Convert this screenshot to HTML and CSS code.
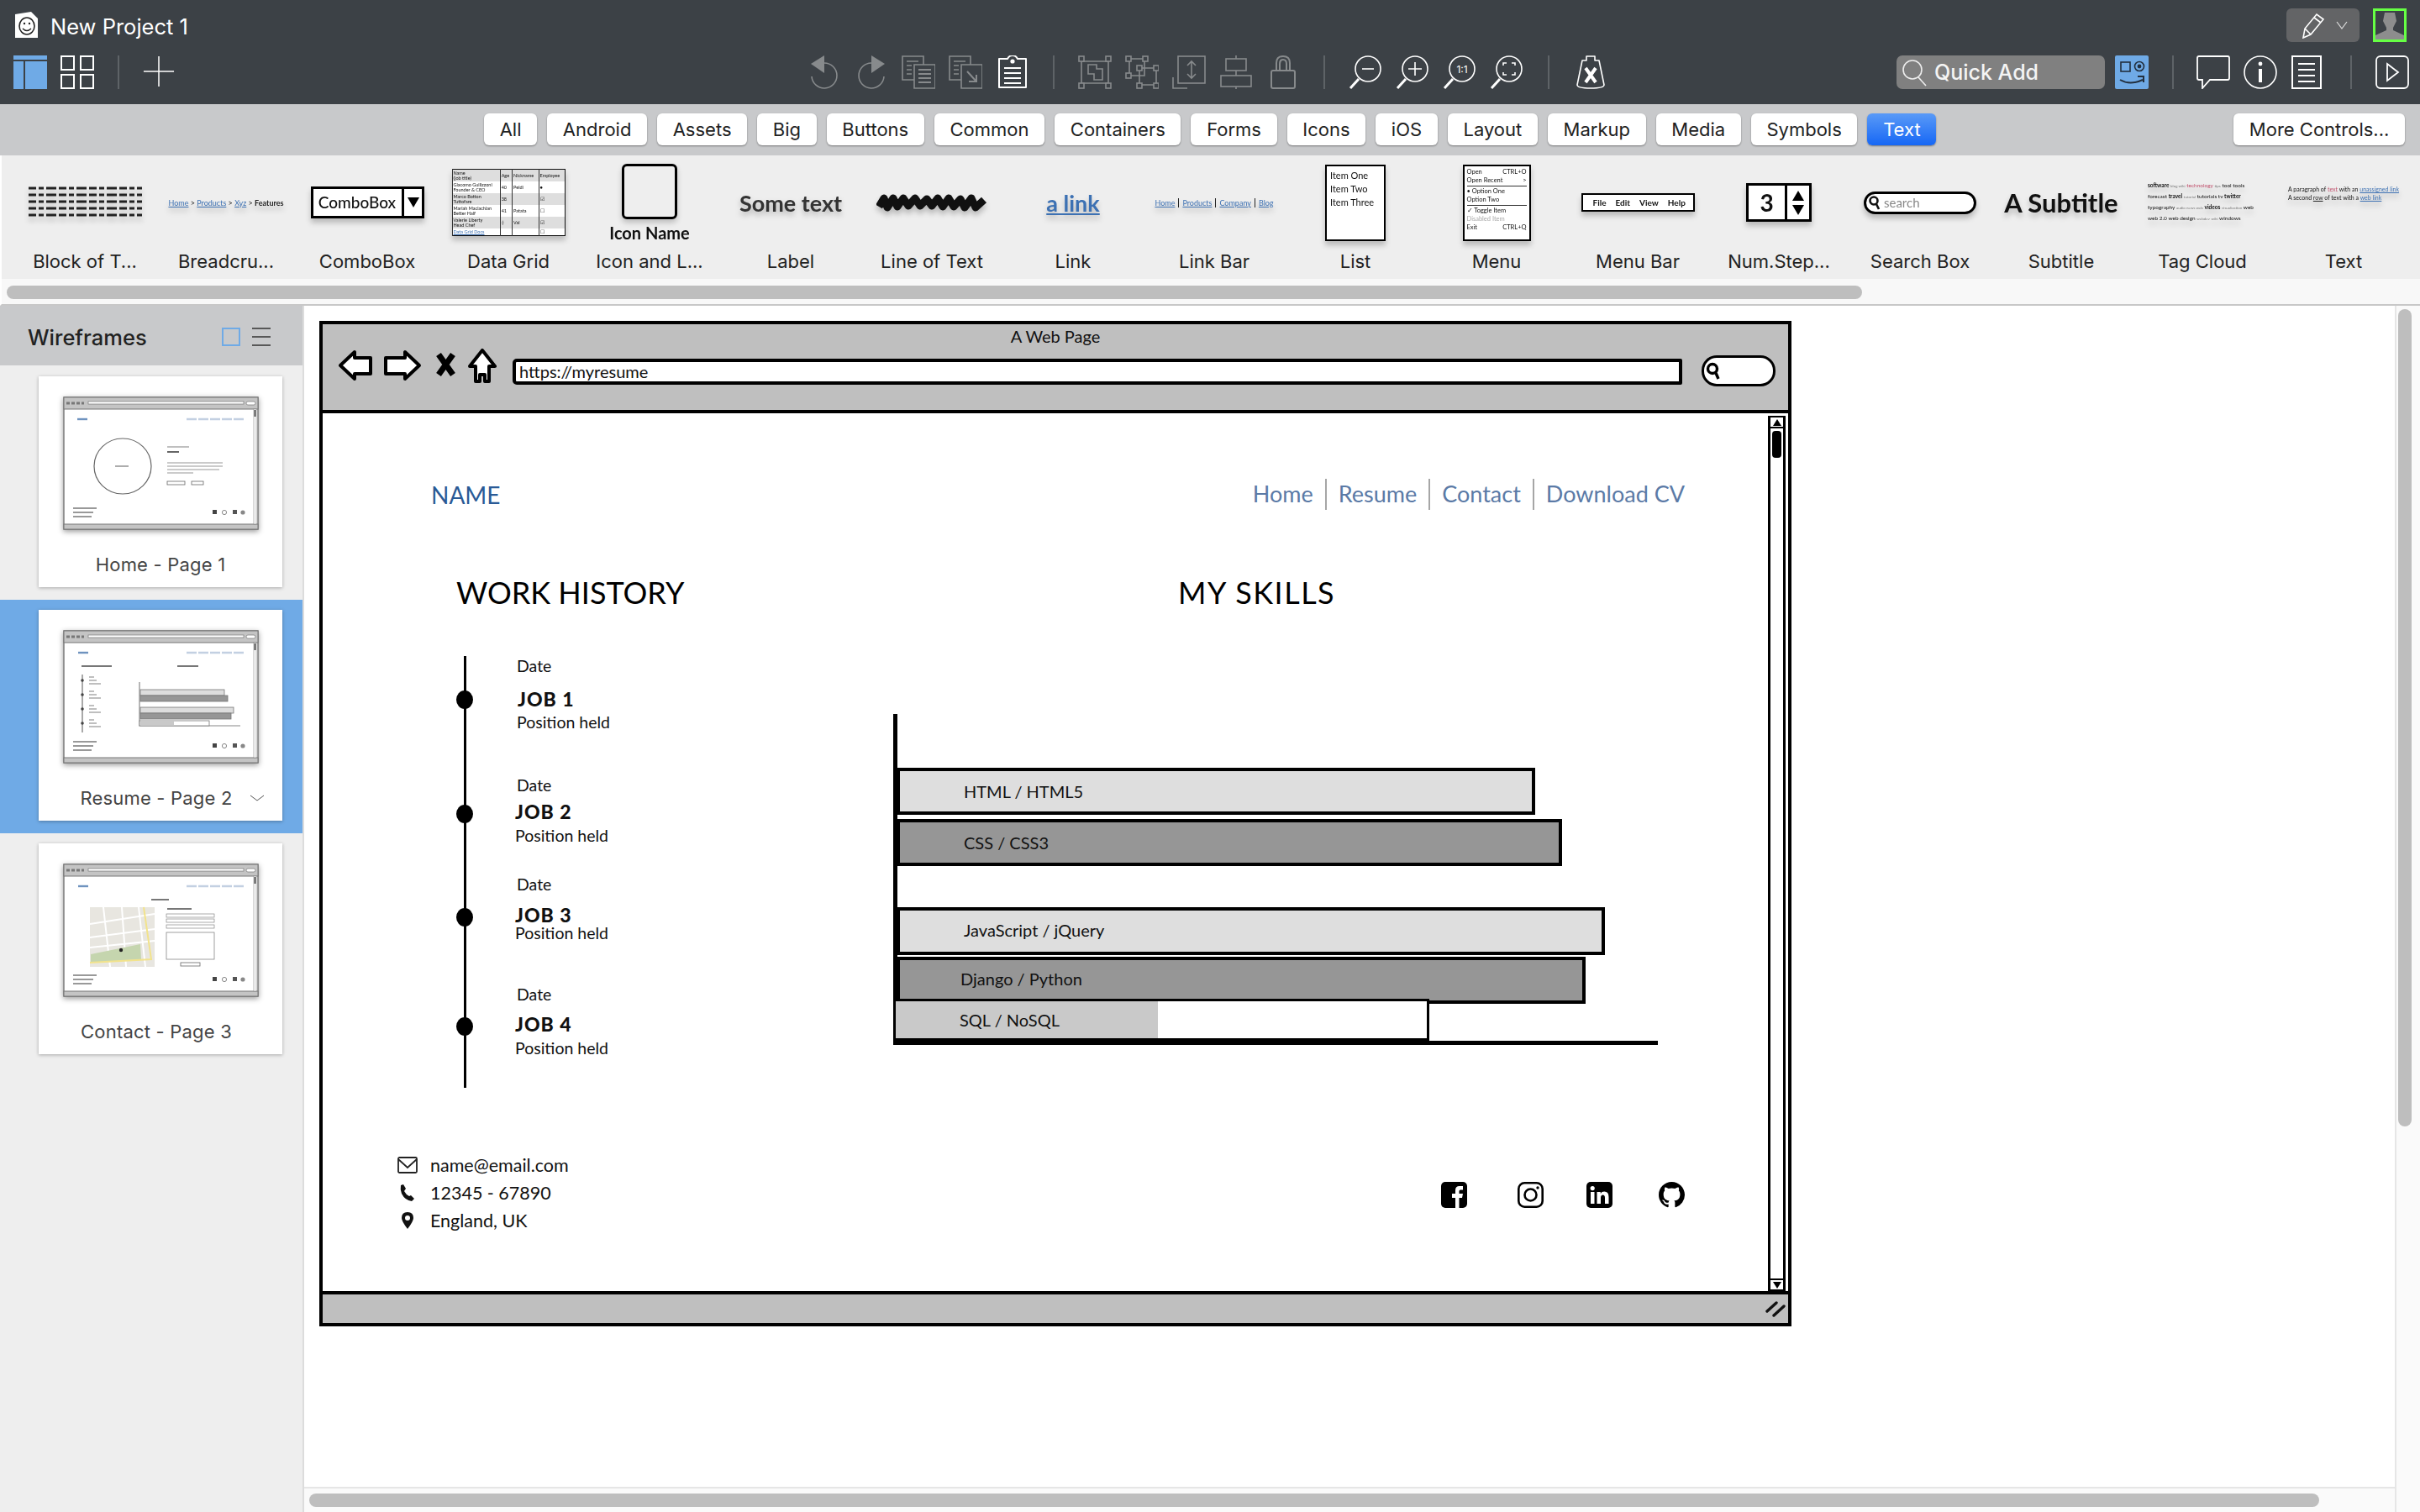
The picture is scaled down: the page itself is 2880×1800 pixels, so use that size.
FILE: index.html
```html
<!DOCTYPE html>
<html lang="en">
<head>
  <meta charset="UTF-8">
  <title>New Project 1</title>
  <link rel="stylesheet" href="styles.css">
</head>
<body>
  <div id="app">
    <header class="topbar">
      <div class="title-row">
        <svg class="app-icon" viewBox="0 0 27 31"><path d="M0 3 L19 0 L27 8 V31 H0 Z" fill="#fff"/><ellipse cx="14" cy="17" rx="9" ry="10" fill="none" stroke="#222" stroke-width="1.6"/><circle cx="11" cy="14" r="1.2" fill="#222"/><circle cx="17" cy="14" r="1.2" fill="#222"/><path d="M9 20 Q14 25 19 20" fill="none" stroke="#222" stroke-width="1.5"/></svg>
        <span class="app-title">New Project 1</span>
        <div class="pencil-btn">
          <svg width="30" height="32" viewBox="0 0 30 32" fill="none" stroke="#fff" stroke-width="1.6"><path d="M3 31 L5 20 L19 3 L27 9 L12 27 Z M16 7 L24 13 M5 20 L12 27"/></svg>
          <svg width="14" height="10" viewBox="0 0 14 10" fill="none" stroke="#ddd" stroke-width="1.2"><path d="M1 1 L7 9 L13 1"/></svg>
        </div>
        <div class="avatar">
          <svg width="34" height="34" viewBox="0 0 34 34"><path d="M11 2 H23 L25 12 L21 20 V23 L34 29 V34 H0 V29 L13 23 V20 L9 12 Z" fill="#8d8d8d"/></svg>
        </div>
      </div>
      <div class="tool-row">
        <svg class="tool" viewBox="0 0 40 40"><path d="M0 0 H40 V5 H0 Z M0 7 H12 V40 H0 Z M14 7 H40 V40 H14 Z" fill="#6faae6"/></svg>
        <svg class="tool" viewBox="0 0 40 40" fill="none" stroke="#fff" stroke-width="2"><rect x="1" y="1" width="15" height="16"/><rect x="24" y="1" width="15" height="16"/><rect x="1" y="23" width="15" height="16"/><rect x="24" y="23" width="15" height="16"/></svg>
        <i class="tool-sep sep-left"></i>
        <svg class="tool tool-plus" viewBox="0 0 40 40" stroke="#fff" stroke-width="1.6"><path d="M20 0 V38 M1 19 H39"/></svg>

        <div class="tool-group center-group">
          <svg class="tool" viewBox="0 0 40 40" fill="none" stroke="#878a8c" stroke-width="1.6"><path d="M20 9 A15 15 0 1 1 5 25"/><path d="M4 10 L20 0 V21 Z" fill="#878a8c" stroke="none"/></svg>
          <svg class="tool" viewBox="0 0 40 40" fill="none" stroke="#878a8c" stroke-width="1.6"><path d="M20 9 A15 15 0 1 0 35 25"/><path d="M36 10 L20 0 V21 Z" fill="#878a8c" stroke="none"/></svg>
          <svg class="tool" viewBox="0 0 40 40" fill="none" stroke="#878a8c" stroke-width="1.6"><path d="M1 1 H26 V29 H1 Z"/><path d="M6 7 H20 M6 12 H12 M6 17 H12 M6 22 H12"/><path d="M15 11 H40 V39 H15 Z" fill="#3c4146"/><path d="M20 17 H35 M20 22 H35 M20 27 H35 M20 32 H35" stroke-width="1.8"/></svg>
          <svg class="tool" viewBox="0 0 40 40" fill="none" stroke="#878a8c" stroke-width="1.6"><path d="M1 1 H26 V29 H1 Z"/><path d="M6 7 H20 M6 12 H12 M6 17 H12 M6 22 H12"/><path d="M15 11 H40 V39 H15 Z" fill="#3c4146"/><path d="M22 19 L33 31 M33 23 V31 H24" stroke-width="2"/></svg>
          <svg class="tool" viewBox="0 0 40 40" fill="none" stroke="#fff" stroke-width="2"><path d="M4 4 H14 Q16 0 20 0 Q24 0 26 4 H36 V38 H4 Z" stroke-linejoin="round"/><circle cx="20" cy="7" r="2.6" fill="#fff" stroke="none"/><path d="M10 15 H30 M10 21 H30 M10 27 H30 M10 33 H30" stroke-width="1.8"/></svg>
          <i class="tool-sep sep-a"></i>
          <svg class="tool" viewBox="0 0 40 40" fill="none" stroke="#878a8c" stroke-width="1.6"><path d="M4 7 H36 M4 33 H36 M4 7 V33 M36 7 V33"/><g fill="#3c4146"><rect x="1" y="1" width="6" height="6"/><rect x="33" y="1" width="6" height="6"/><rect x="1" y="33" width="6" height="6"/><rect x="33" y="33" width="6" height="6"/></g><path d="M12 11 H22 V16 H29 V29 H19 V22 H12 Z"/></svg>
          <svg class="tool" viewBox="0 0 40 40" fill="none" stroke="#878a8c" stroke-width="1.6"><path d="M5 4 H23 V24 H5 Z M17 15 H37 V35 H17 Z"/><g fill="#3c4146"><rect x="1" y="1" width="6" height="6"/><rect x="21" y="1" width="6" height="6"/><rect x="1" y="21" width="6" height="6"/><rect x="14" y="12" width="6" height="6"/><rect x="34" y="12" width="6" height="6"/><rect x="14" y="33" width="6" height="6"/><rect x="34" y="33" width="6" height="6"/></g></svg>
          <svg class="tool" viewBox="0 0 40 40" fill="none" stroke="#878a8c" stroke-width="1.6"><rect x="7" y="1" width="32" height="32"/><path d="M1 26 V39 H18"/><path d="M23 7 V27 M18 12 L23 7 L28 12 M18 22 L23 27 L28 22"/></svg>
          <svg class="tool" viewBox="0 0 40 40" fill="none" stroke="#878a8c" stroke-width="1.6"><path d="M20 0 V40"/><rect x="8" y="4" width="24" height="14" fill="#3c4146"/><rect x="2" y="24" width="36" height="13" fill="#3c4146"/></svg>
          <svg class="tool" viewBox="0 0 40 40" fill="none" stroke="#878a8c" stroke-width="2"><path d="M12 18 V9 Q12 1 20 1 Q28 1 28 9 V18 M16 18 V10 Q16 5 20 5 Q24 5 24 10 V18"/><rect x="6" y="18" width="28" height="21" rx="2"/></svg>
          <i class="tool-sep sep-b"></i>
          <svg class="tool" viewBox="0 0 40 40" fill="none" stroke="#fff" stroke-width="1.6"><circle cx="23" cy="16" r="15"/><path d="M12 28 L2 39" stroke-width="3"/><path d="M16 16 H30"/></svg>
          <svg class="tool" viewBox="0 0 40 40" fill="none" stroke="#fff" stroke-width="1.6"><circle cx="23" cy="16" r="15"/><path d="M12 28 L2 39" stroke-width="3"/><path d="M15 16 H31 M23 8 V24"/></svg>
          <svg class="tool" viewBox="0 0 40 40" fill="none" stroke="#fff" stroke-width="1.6"><circle cx="23" cy="16" r="15"/><path d="M12 28 L2 39" stroke-width="3"/><text x="23" y="21" class="tool-text" text-anchor="middle" fill="#fff" stroke="none">1:1</text></svg>
          <svg class="tool" viewBox="0 0 40 40" fill="none" stroke="#fff" stroke-width="1.6"><circle cx="23" cy="16" r="15"/><path d="M12 28 L2 39" stroke-width="3"/><path d="M16 12 V9 H20 M26 9 H30 V12 M30 20 V23 H26 M20 23 H16 V20"/></svg>
          <i class="tool-sep sep-c"></i>
          <svg class="tool" viewBox="0 0 40 40" fill="none" stroke="#fff" stroke-width="1.6"><path d="M10 6 H15 V1 H25 V6 H30 L36 35 Q36 39 20 39 Q4 39 4 35 Z" stroke-linejoin="round"/><path d="M14 15 L26 32 M26 15 L14 32" stroke-width="4"/></svg>
        </div>

        <div class="quick-add">
          <svg width="30" height="34" viewBox="0 0 30 34" fill="none" stroke="#eee" stroke-width="1.6"><circle cx="13" cy="14" r="11"/><path d="M20 23 L29 33"/></svg>
          <span>Quick Add</span>
        </div>
        <div class="amazon-btn">
          <svg width="40" height="40" viewBox="0 0 40 40" fill="none" stroke="#22303f" stroke-width="1.6"><rect x="7" y="8" width="11" height="11"/><circle cx="29" cy="13" r="5.5"/><circle cx="29" cy="13" r="1.6" fill="#22303f"/><path d="M6 29 Q18 36 33 29 M27 25 H34 V32" stroke-width="2"/></svg>
        </div>
        <i class="tool-sep sep-d"></i>
        <div class="tool-group right-group">
          <svg class="tool" viewBox="0 0 40 40" fill="none" stroke="#fff" stroke-width="1.8"><path d="M3 1 H37 Q39 1 39 3 V27 Q39 29 37 29 H16 L7 39 V29 H3 Q1 29 1 27 V3 Q1 1 3 1 Z"/></svg>
          <svg class="tool" viewBox="0 0 40 40" fill="none" stroke="#fff" stroke-width="1.6"><circle cx="20" cy="20" r="19"/><path d="M20 16 V32" stroke-width="4"/><circle cx="20" cy="10" r="2.4" fill="#fff" stroke="none"/></svg>
          <svg class="tool" viewBox="0 0 40 40" fill="none" stroke="#fff" stroke-width="2"><rect x="2" y="1" width="34" height="38"/><path d="M9 10 H29 M9 17 H29 M9 24 H29 M9 31 H29" stroke-width="1.8"/></svg>
          <i class="tool-sep sep-e"></i>
          <svg class="tool" viewBox="0 0 40 40" fill="none" stroke="#fff" stroke-width="1.8"><rect x="1" y="1" width="38" height="38" rx="5"/><path d="M14 10 L27 20 L14 30 Z"/></svg>
        </div>
      </div>
    </header>

    <nav class="filter-bar">
      <button class="tab">All</button>
      <button class="tab">Android</button>
      <button class="tab">Assets</button>
      <button class="tab">Big</button>
      <button class="tab">Buttons</button>
      <button class="tab">Common</button>
      <button class="tab">Containers</button>
      <button class="tab">Forms</button>
      <button class="tab">Icons</button>
      <button class="tab">iOS</button>
      <button class="tab">Layout</button>
      <button class="tab">Markup</button>
      <button class="tab">Media</button>
      <button class="tab">Symbols</button>
      <button class="tab active">Text</button>
      <button class="tab more">More Controls...</button>
    </nav>

    <section class="library">
      <div class="lib-item">
        <div class="preview">
          <svg class="mini-blocks" width="136" height="40" viewBox="0 0 136 40" stroke="#222" stroke-width="3" stroke-dasharray="9 3 6 3 12 3"><path d="M1 3 H136 M1 11 H136 M1 19 H136 M1 27 H136 M1 35 H136"/></svg>
        </div>
        <div class="lib-label">Block of T...</div>
      </div>
      <div class="lib-item">
        <div class="preview"><div class="crumbs mini-shadow"><u>Home</u> &gt; <u>Products</u> &gt; <u>Xyz</u> &gt; <b>Features</b></div></div>
        <div class="lib-label">Breadcru...</div>
      </div>
      <div class="lib-item">
        <div class="preview">
          <div class="mini-combo mini-shadow"><span>ComboBox</span><i class="arrow-down"></i></div>
        </div>
        <div class="lib-label">ComboBox</div>
      </div>
      <div class="lib-item">
        <div class="preview">
          <table class="mini-grid mini-shadow">
            <tr class="odd"><td>Name<br>(job title)</td><td>Age</td><td>Nickname</td><td>Employee</td></tr>
            <tr><td>Giacomo Guilizzoni<br>Founder &amp; CEO</td><td>40</td><td>Peldi</td><td>&#9679;</td></tr>
            <tr class="odd"><td>Marco Botton<br>Tuttofare</td><td>38</td><td></td><td>&#9745;</td></tr>
            <tr><td>Mariah Maclachlan<br>Better Half</td><td>41</td><td>Patata</td><td>&#9744;</td></tr>
            <tr class="odd"><td>Valerie Liberty<br>Head Chef</td><td>:)</td><td>Val</td><td>&#9745;</td></tr>
            <tr><td class="grid-link">Data Grid Docs</td><td></td><td></td><td>&#9744;</td></tr>
          </table>
        </div>
        <div class="lib-label">Data Grid</div>
      </div>
      <div class="lib-item">
        <div class="preview icon-label">
          <div class="mini-icon"></div>
          <div class="mini-icon-name">Icon Name</div>
        </div>
        <div class="lib-label">Icon and L...</div>
      </div>
      <div class="lib-item">
        <div class="preview"><span class="mini-label mini-shadow">Some text</span></div>
        <div class="lib-label">Label</div>
      </div>
      <div class="lib-item">
        <div class="preview">
          <svg class="mini-shadow" width="132" height="28" viewBox="0 0 132 28" fill="none" stroke="#111" stroke-width="9" stroke-linejoin="round"><path d="M3 19 L9 9 L13 20 L20 9 L25 19 L32 9 L38 18 L46 9 L52 18 L60 10 L66 18 L73 9 L79 19 L86 9 L92 19 L100 10 L105 20 L113 9 L118 20 L128 11"/></svg>
        </div>
        <div class="lib-label">Line of Text</div>
      </div>
      <div class="lib-item">
        <div class="preview"><u class="mini-link mini-shadow">a link</u></div>
        <div class="lib-label">Link</div>
      </div>
      <div class="lib-item">
        <div class="preview"><div class="crumbs bar-links mini-shadow"><u>Home</u><u>Products</u><u>Company</u><u>Blog</u></div></div>
        <div class="lib-label">Link Bar</div>
      </div>
      <div class="lib-item">
        <div class="preview">
          <div class="mini-list mini-shadow"><div>Item One</div><div>Item Two</div><div>Item Three</div></div>
        </div>
        <div class="lib-label">List</div>
      </div>
      <div class="lib-item">
        <div class="preview">
          <div class="mini-menu mini-shadow">
            <div>Open<span>CTRL+O</span></div>
            <div>Open Recent<span>&gt;</span></div>
            <hr>
            <div>&bull; Option One</div>
            <div>Option Two</div>
            <hr>
            <div>&#10003; Toggle Item</div>
            <div class="disabled">Disabled Item</div>
            <div>Exit<span>CTRL+Q</span></div>
          </div>
        </div>
        <div class="lib-label">Menu</div>
      </div>
      <div class="lib-item">
        <div class="preview"><div class="mini-menubar mini-shadow"><span>File</span><span>Edit</span><span>View</span><span>Help</span></div></div>
        <div class="lib-label">Menu Bar</div>
      </div>
      <div class="lib-item">
        <div class="preview">
          <div class="mini-stepper mini-shadow"><span>3</span><div class="step-arrows"><i class="arrow-up"></i><i class="arrow-down"></i></div></div>
        </div>
        <div class="lib-label">Num.Step...</div>
      </div>
      <div class="lib-item">
        <div class="preview">
          <div class="mini-search mini-shadow">
            <svg width="14" height="18" viewBox="0 0 14 18" fill="none" stroke="#111" stroke-width="2.6"><circle cx="6" cy="7" r="4.5"/><path d="M9 11 L12 17"/></svg>
            <span>search</span>
          </div>
        </div>
        <div class="lib-label">Search Box</div>
      </div>
      <div class="lib-item">
        <div class="preview"><span class="mini-subtitle mini-shadow">A Subtitle</span></div>
        <div class="lib-label">Subtitle</div>
      </div>
      <div class="lib-item">
        <div class="preview">
          <div class="mini-cloud mini-shadow">
            <div><b>software</b> <small>blog wiki</small> <em>technology</em> <small>tips</small> tool tools</div>
            <div>forecast <b>travel</b> <small>tutorial</small> tutorials tv <b>twitter</b></div>
            <div>typography <small>audio news web</small> <b>videos</b> <small>visualization</small> web</div>
            <div>web 2.0 web design <small>webdev</small> <small>wiki</small> windows</div>
          </div>
        </div>
        <div class="lib-label">Tag Cloud</div>
      </div>
      <div class="lib-item">
        <div class="preview">
          <div class="mini-para mini-shadow">A paragraph of <em>text</em> with an <u>unassigned link</u><br>A second <u class="plain">row</u> of text with a <u>web link</u></div>
        </div>
        <div class="lib-label">Text</div>
      </div>
    </section>

    <div class="lib-scroll"><div class="lib-thumb"></div></div>

    <div class="workspace">
      <aside class="sidebar">
        <div class="side-head">
          <span class="side-title">Wireframes</span>
          <i class="side-view"></i>
          <svg class="side-menu" width="22" height="22" viewBox="0 0 22 22" stroke="#333" stroke-width="1.6"><path d="M0 1 H22 M0 11 H22 M0 21 H22"/></svg>
        </div>
        <svg class="defs" width="0" height="0">
          <symbol id="thumb-frame" viewBox="0 0 233 159">
            <rect x="1" y="1" width="231" height="157" fill="#fff" stroke="#777" stroke-width="1.4"/>
            <rect x="1" y="1" width="231" height="14" fill="#c4c4c4" stroke="#777" stroke-width="1"/>
            <rect x="1" y="152" width="231" height="6" fill="#c4c4c4" stroke="#777" stroke-width="1"/>
            <rect x="30" y="6" width="185" height="3" fill="#fff" stroke="#777" stroke-width=".7"/>
            <rect x="218" y="6" width="11" height="4" rx="2" fill="#fff" stroke="#777" stroke-width=".7"/>
            <path d="M4 8 H25" stroke="#777" stroke-width="3" stroke-dasharray="4 2"/>
            <rect x="227" y="15" width="3" height="137" fill="#fff" stroke="#888" stroke-width=".6"/>
            <rect x="227.5" y="16" width="2" height="8" fill="#555"/>
            <path d="M12 133 H40 M12 138 H36 M12 143 H34" stroke="#999" stroke-width="2"/>
            <rect x="178" y="135" width="5" height="5" fill="#444"/>
            <circle cx="192" cy="138" r="2.6" fill="none" stroke="#888"/>
            <rect x="202" y="135" width="5" height="5" fill="#555"/>
            <circle cx="214" cy="138" r="2.6" fill="#888"/>
          </symbol>
        </svg>

        <div class="page">
          <div class="page-card">
            <svg class="thumb" viewBox="0 0 233 159">
              <use href="#thumb-frame"/>
              <path d="M17 27 H29" stroke="#6f93bf" stroke-width="2.4"/>
              <path d="M147 27 H215" stroke="#c3d0e2" stroke-width="2.4" stroke-dasharray="12 2"/>
              <ellipse cx="71" cy="83" rx="34" ry="33" fill="none" stroke="#666" stroke-width="1.2"/>
              <path d="M62 83 H78" stroke="#999" stroke-width="1.6"/>
              <path d="M124 60 H150" stroke="#aaa" stroke-width="1.5"/>
              <path d="M124 66 H138" stroke="#666" stroke-width="2"/>
              <path d="M124 79 H190 M124 83 H190 M124 87 H186 M124 91 H155" stroke="#bbb" stroke-width="1.6"/>
              <rect x="124" y="101" width="21" height="4" fill="#fff" stroke="#666" stroke-width=".8"/>
              <rect x="153" y="101" width="14" height="4" fill="#fff" stroke="#666" stroke-width=".8"/>
            </svg>
            <div class="page-label">Home - Page 1</div>
          </div>
        </div>

        <div class="page selected">
          <div class="page-card">
            <svg class="thumb" viewBox="0 0 233 159">
              <use href="#thumb-frame"/>
              <path d="M18 27 H30" stroke="#6f93bf" stroke-width="2.4"/>
              <path d="M147 27 H216" stroke="#c3d0e2" stroke-width="2.4" stroke-dasharray="12 2"/>
              <path d="M22 43 H58 M136 43 H161" stroke="#777" stroke-width="2"/>
              <path d="M23 53 V122" stroke="#555" stroke-width="1"/>
              <g fill="#444"><circle cx="23" cy="60" r="1.8"/><circle cx="23" cy="77" r="1.8"/><circle cx="23" cy="94" r="1.8"/><circle cx="23" cy="111" r="1.8"/></g>
              <path d="M31 56 H37 M31 60 H40 M31 64 H45 M31 73 H37 M31 77 H40 M31 81 H45 M31 90 H37 M31 94 H40 M31 98 H45 M31 107 H37 M31 111 H40 M31 115 H45" stroke="#aaa" stroke-width="1.4"/>
              <path d="M91 62 V114 H211" fill="none" stroke="#888" stroke-width="1.2"/>
              <rect x="92" y="71" width="100" height="7" fill="#ddd" stroke="#777" stroke-width=".8"/>
              <rect x="92" y="78" width="104" height="7" fill="#969696" stroke="#777" stroke-width=".8"/>
              <rect x="92" y="92" width="111" height="7" fill="#ddd" stroke="#777" stroke-width=".8"/>
              <rect x="92" y="99" width="108" height="7" fill="#969696" stroke="#777" stroke-width=".8"/>
              <rect x="91" y="108" width="83" height="6" fill="#fff" stroke="#777" stroke-width=".8"/>
              <rect x="92" y="108.5" width="40" height="5" fill="#c9c9c9"/>
            </svg>
            <div class="page-label page-label-short">Resume - Page 2</div>
            <svg class="page-chevron" width="16" height="8" viewBox="0 0 16 8" fill="none" stroke="#555" stroke-width="1"><path d="M0 1 L8 7 L16 1"/></svg>
          </div>
        </div>

        <div class="page">
          <div class="page-card">
            <svg class="thumb" viewBox="0 0 233 159">
              <use href="#thumb-frame"/>
              <path d="M18 27 H30" stroke="#6f93bf" stroke-width="2.4"/>
              <path d="M147 27 H216" stroke="#c3d0e2" stroke-width="2.4" stroke-dasharray="12 2"/>
              <path d="M105 43 H126 M124 54 H153" stroke="#777" stroke-width="1.8"/>
              <rect x="32" y="52" width="77" height="71" fill="#e8e6e0"/>
              <path d="M48 52 L56 123 M70 52 L75 123 M90 52 L98 123 M32 72 L109 60 M32 88 L109 78 M32 100 L109 92" stroke="#fff" stroke-width="2"/>
              <path d="M33 108 L92 96 L93 114 L33 118 Z" fill="#c5d5ae"/>
              <path d="M32 118 L105 114 L96 52" fill="none" stroke="#f2e38c" stroke-width="2"/>
              <circle cx="69" cy="103" r="2.2" fill="#222"/>
              <rect x="123" y="60" width="57" height="4" fill="#fff" stroke="#888" stroke-width=".7"/>
              <rect x="123" y="66" width="57" height="4" fill="#fff" stroke="#888" stroke-width=".7"/>
              <rect x="123" y="73" width="57" height="4" fill="#fff" stroke="#888" stroke-width=".7"/>
              <rect x="123" y="82" width="57" height="32" fill="#fff" stroke="#888" stroke-width=".8"/>
              <rect x="140" y="118" width="23" height="4" fill="#fff" stroke="#666" stroke-width=".8"/>
            </svg>
            <div class="page-label page-label-short">Contact - Page 3</div>
          </div>
        </div>
      </aside>

      <main class="canvas">
        <div class="stage">
          <div class="wf-window">
            <div class="wf-head">
              <div class="wf-title">A Web Page</div>
              <div class="wf-nav">
                <svg width="188" height="42" viewBox="0 0 188 42" stroke="#000" stroke-width="4" stroke-linejoin="round" fill="#fff">
                  <path d="M2 20 L19 4 V11 H38 V30 H19 V36 Z"/>
                  <path d="M96 20 L79 4 V11 H56 V30 H79 V36 Z"/>
                  <path d="M119 7 L136 31 M136 7 L119 31" stroke-width="7" fill="none"/>
                  <path d="M171 2 L186 21 H179 V39 H174 V31 H168 V39 H163 V21 H156 Z"/>
                </svg>
                <div class="wf-url">https://myresume</div>
                <div class="wf-search">
                  <svg width="20" height="24" viewBox="0 0 20 24" fill="none" stroke="#000" stroke-width="3.4"><circle cx="8" cy="10" r="5.5"/><path d="M12 15 L15 22"/></svg>
                </div>
              </div>
            </div>

            <div class="wf-body">
              <div class="wf-page">
                <div class="site-nav">
                  <span class="site-name">NAME</span>
                  <div class="site-links">
                    <span>Home</span><span>Resume</span><span>Contact</span><span>Download CV</span>
                  </div>
                </div>

                <div class="columns">
                  <section class="history">
                    <h2>WORK HISTORY</h2>
                    <div class="timeline">
                      <div class="job job-1"><div class="job-date">Date</div><div class="job-name">JOB 1</div><div class="job-pos">Position held</div></div>
                      <div class="job job-2"><div class="job-date">Date</div><div class="job-name">JOB 2</div><div class="job-pos">Position held</div></div>
                      <div class="job job-3"><div class="job-date">Date</div><div class="job-name">JOB 3</div><div class="job-pos">Position held</div></div>
                      <div class="job job-4"><div class="job-date">Date</div><div class="job-name">JOB 4</div><div class="job-pos">Position held</div></div>
                    </div>
                  </section>

                  <section class="skills">
                    <h2>MY SKILLS</h2>
                    <div class="chart">
                      <div class="bar light" style="width: 759px">HTML / HTML5</div>
                      <div class="bar dark" style="width: 791px">CSS / CSS3</div>
                      <div class="bar light group-start" style="width: 842px">JavaScript / jQuery</div>
                      <div class="bar dark django" style="width: 819px">Django / Python</div>
                      <div class="bar progress" style="width: 638px"><div class="progress-fill" style="width: 312px">SQL / NoSQL</div></div>
                    </div>
                  </section>
                </div>

                <div class="site-foot">
                  <div class="contact">
                    <div class="contact-row">
                      <svg width="24" height="20" viewBox="0 0 24 20" fill="none" stroke="#222" stroke-width="1.8"><rect x="1" y="1" width="22" height="18" rx="1.5"/><path d="M1 3 L12 13 L23 3"/></svg>
                      <span>name@email.com</span>
                    </div>
                    <div class="contact-row">
                      <svg width="24" height="20" viewBox="0 0 24 20"><path d="M4 1 L7 0 L10 5 L8 8 Q10 12 14 14 L16 13 L20 17 L17 20 Q9 19 5 11 Q3 6 4 1 Z" fill="#111"/></svg>
                      <span>12345 - 67890</span>
                    </div>
                    <div class="contact-row">
                      <svg width="24" height="20" viewBox="0 0 24 20"><path fill-rule="evenodd" d="M12 0 Q19 0 19 7 Q19 11 12 20 Q5 11 5 7 Q5 0 12 0 Z M12 4 A3 3 0 1 0 12 10 A3 3 0 1 0 12 4 Z" fill="#111"/></svg>
                      <span>England, UK</span>
                    </div>
                  </div>
                  <div class="social">
                    <svg width="31" height="31" viewBox="0 0 31 31"><rect width="31" height="31" rx="5" fill="#000"/><path d="M17 31 V19 H13 V14 H17 V10 Q17 5 22 5 H26 V9.5 H23 Q21.5 9.5 21.5 11 V14 H26 L25 19 H21.5 V31 Z" fill="#fff"/></svg>
                    <svg width="31" height="31" viewBox="0 0 31 31" fill="none" stroke="#000" stroke-width="2.6"><rect x="1.3" y="1.3" width="28.4" height="28.4" rx="7"/><circle cx="15.5" cy="15.5" r="7"/><circle cx="24" cy="7" r="1.7" fill="#000" stroke="none"/></svg>
                    <svg width="31" height="31" viewBox="0 0 31 31"><rect width="31" height="31" rx="5" fill="#000"/><path d="M5 12 H9.5 V26 H5 Z M7.2 5 A2.6 2.6 0 1 1 7.2 10.2 A2.6 2.6 0 1 1 7.2 5 Z M12.5 12 H16.8 V14 Q18 11.6 21.2 11.6 Q26.5 11.6 26.5 18 V26 H22 V19 Q22 15.5 19.5 15.5 Q17 15.5 17 19 V26 H12.5 Z" fill="#fff"/></svg>
                    <svg width="31" height="31" viewBox="0 0 16 16"><path d="M8 0C3.58 0 0 3.58 0 8c0 3.54 2.29 6.53 5.47 7.59.4.07.55-.17.55-.38 0-.19-.01-.82-.01-1.49-2.01.37-2.53-.49-2.69-.94-.09-.23-.48-.94-.82-1.13-.28-.15-.68-.52-.01-.53.63-.01 1.08.58 1.23.82.72 1.21 1.87.87 2.33.66.07-.52.28-.87.51-1.07-1.78-.2-3.64-.89-3.64-3.95 0-.87.31-1.59.82-2.15-.08-.2-.36-1.02.08-2.12 0 0 .67-.21 2.2.82.64-.18 1.32-.27 2-.27.68 0 1.36.09 2 .27 1.53-1.04 2.2-.82 2.2-.82.44 1.1.16 1.92.08 2.12.51.56.82 1.27.82 2.15 0 3.07-1.87 3.75-3.65 3.95.29.25.54.73.54 1.48 0 1.07-.01 1.93-.01 2.2 0 .21.15.46.55.38A8.013 8.013 0 0016 8c0-4.42-3.58-8-8-8z" fill="#000"/></svg>
                  </div>
                </div>
              </div>

              <div class="wf-scroll">
                <div class="scroll-top">
                  <div class="scroll-btn"><i class="tri-up"></i></div>
                  <div class="scroll-handle"></div>
                </div>
                <div class="scroll-btn"><i class="tri-down"></i></div>
              </div>
            </div>

            <div class="wf-foot">
              <svg width="24" height="19" viewBox="0 0 24 19" stroke="#111" stroke-width="3.4" stroke-linecap="round"><path d="M2 12 L13 2 M10 17 L22 6"/></svg>
            </div>
          </div>
        </div>
        <div class="v-scroll"><div class="v-thumb"></div></div>
        <div class="h-scroll"><div class="h-thumb"></div></div>
      </main>
    </div>
  </div>
</body>
</html>
```

FILE: styles.css
```css
* {
  box-sizing: border-box;
}

body {
  margin: 0;
  font-family: "Inter", "Liberation Sans", sans-serif;
  background: #fff;
  overflow: hidden;
}

#app {
  width: 2880px;
  height: 1800px;
  display: flex;
  flex-direction: column;
  overflow: hidden;
}

/* top bar */
.topbar {
  height: 124px;
  background: #3c4146;
  color: #fff;
}

.title-row {
  height: 66px;
  display: flex;
  align-items: flex-start;
  padding: 10px 16px 0 18px;
}

.app-icon {
  width: 27px;
  height: 31px;
  margin-top: 4px;
}

.app-title {
  margin: 6px 0 0 15px;
  font-size: 25.5px;
  line-height: 32px;
}

.pencil-btn {
  margin-left: auto;
  width: 87px;
  height: 40px;
  border-radius: 6px;
  background: #636466;
  display: flex;
  align-items: center;
  gap: 12px;
  padding-left: 17px;
}

.avatar {
  width: 40px;
  height: 40px;
  margin-left: 16px;
  border: 3px solid #66ff44;
  background: #3c4146;
  overflow: hidden;
}

.tool-row {
  display: flex;
  align-items: center;
  padding-left: 16px;
  height: 40px;
}

.tool {
  width: 40px;
  height: 40px;
  flex: none;
}

.tool + .tool {
  margin-left: 16px;
}

.tool-text {
  font-size: 12px;
  font-family: "Inter", sans-serif;
}

.tool-sep {
  display: block;
  width: 2px;
  height: 40px;
  background: #5e6367;
  flex: none;
}

.sep-left { margin: 0 28px; }
.tool-plus { margin-left: 0; width: 38px; }

.tool-group {
  display: flex;
  align-items: center;
}

.center-group { margin-left: 753px; }
.sep-a { margin: 0 28px 0 28px; }
.sep-b { margin: 0 28px 0 28px; }
.sep-c { margin: 0 29px 0 29px; }

.quick-add {
  margin-left: 344px;
  width: 248px;
  height: 40px;
  border-radius: 7px;
  background: #808080;
  display: flex;
  align-items: center;
  gap: 9px;
  padding-left: 6px;
  font-size: 25px;
  font-weight: 500;
  color: #f4f4f4;
}

.amazon-btn {
  margin-left: 12px;
  width: 40px;
  height: 40px;
  border-radius: 2px;
  background: #6faae6;
}

.sep-d { margin-left: 28px; }
.right-group { margin-left: 27px; }
.sep-e { margin: 0 28px 0 31px; }
.sep-e + .tool { margin-left: 0; }

/* filter tabs */
.filter-bar {
  height: 61px;
  background: #c8c9cb;
  display: flex;
  align-items: flex-start;
  gap: 12px;
  padding: 11px 18px 0 576px;
}

.tab {
  height: 38px;
  padding: 0 18.67px;
  border: 0;
  border-radius: 6px;
  background: #fff;
  box-shadow: 0 1px 2px rgba(0, 0, 0, 0.4);
  font: 22px/38px "Inter", "Liberation Sans", sans-serif;
  color: #222;
}

.tab.active {
  background: linear-gradient(#5a9af7, #1667f5);
  color: #fff;
}

.tab.more {
  margin-left: auto;
}

/* library strip */
.library {
  height: 147px;
  background: #eeeeee;
  border-left: 2px solid #fff;
  display: grid;
  grid-template-columns: repeat(17, 168px);
  padding: 8px 0 0 15px;
}

.lib-item {
  display: flex;
  flex-direction: column;
  align-items: center;
}

.preview {
  height: 96px;
  width: 168px;
  display: flex;
  align-items: center;
  justify-content: center;
  font-family: "Lato", sans-serif;
  color: #111;
}

.lib-label {
  margin-top: 4px;
  font-size: 22px;
  line-height: 36px;
  color: #222;
}

.mini-shadow {
  filter: drop-shadow(0 5px 3px rgba(0, 0, 0, 0.22));
}

.mini-blocks {
  filter: blur(0.5px) drop-shadow(0 5px 3px rgba(0, 0, 0, 0.22));
}

.crumbs {
  font-size: 9px;
  white-space: nowrap;
  color: #222;
}

.crumbs u {
  color: #3d71b3;
}

.bar-links {
  display: flex;
  gap: 4px;
}

.bar-links u + u {
  border-left: 1px solid #222;
  padding-left: 4px;
}

.mini-combo {
  width: 135px;
  height: 38px;
  border: 3px solid #000;
  background: #fff;
  display: flex;
  align-items: center;
  font-size: 19px;
  font-weight: 500;
}

.mini-combo span {
  width: 108px;
  text-align: center;
  border-right: 3px solid #000;
  line-height: 32px;
}

.mini-combo .arrow-down {
  margin-left: 4px;
}

.arrow-down {
  display: block;
  width: 0;
  height: 0;
  border-left: 7px solid transparent;
  border-right: 7px solid transparent;
  border-top: 12px solid #000;
}

.arrow-up {
  display: block;
  width: 0;
  height: 0;
  border-left: 7px solid transparent;
  border-right: 7px solid transparent;
  border-bottom: 12px solid #000;
}

.mini-grid {
  width: 135px;
  height: 76px;
  border-collapse: collapse;
  border: 1px solid #111;
  font-size: 5.5px;
  line-height: 6px;
  background: #fff;
}

.mini-grid td {
  padding: 1px;
  border-left: 1px solid #333;
  white-space: nowrap;
}

.mini-grid .odd {
  background: #dedede;
}

.grid-link {
  color: #3d71b3;
  text-decoration: underline;
}

.icon-label {
  flex-direction: column;
  gap: 6px;
}

.mini-icon {
  width: 66px;
  height: 66px;
  border: 3px solid #000;
  border-radius: 6px;
  background: #eee;
  filter: drop-shadow(0 4px 3px rgba(0, 0, 0, 0.2));
}

.mini-icon-name {
  font-size: 20px;
  font-weight: 700;
  line-height: 20px;
  filter: blur(0.4px);
}

.mini-label {
  font-size: 27px;
  font-weight: 700;
  color: #333;
  filter: blur(0.5px) drop-shadow(0 4px 3px rgba(0, 0, 0, 0.25));
}

.mini-link {
  font-size: 27px;
  font-weight: 700;
  color: #3d71b3;
}

.mini-list {
  width: 72px;
  height: 91px;
  border: 2px solid #000;
  background: #fff;
  padding: 3px 4px;
  font-size: 11px;
  line-height: 16px;
  white-space: nowrap;
}

.mini-menu {
  width: 81px;
  height: 91px;
  border: 2px solid #000;
  background: #fff;
  padding: 2px 3px;
  font-size: 7.5px;
  line-height: 10px;
}

.mini-menu div {
  display: flex;
  justify-content: space-between;
}

.mini-menu hr {
  margin: 1px 0;
  border: 0;
  border-top: 1px solid #333;
}

.mini-menu .disabled {
  color: #aaa;
}

.mini-menubar {
  width: 135px;
  height: 22px;
  border: 2px solid #000;
  background: #fff;
  display: flex;
  align-items: center;
  gap: 11px;
  padding-left: 12px;
  font-size: 10px;
  font-weight: 700;
}

.mini-stepper {
  width: 78px;
  height: 46px;
  border: 3px solid #000;
  background: #fff;
  display: flex;
  align-items: center;
  font-size: 28px;
  font-weight: 700;
}

.mini-stepper span {
  width: 46px;
  text-align: center;
  border-right: 3px solid #000;
  line-height: 40px;
}

.step-arrows {
  flex: 1;
  display: flex;
  flex-direction: column;
  align-items: center;
  gap: 5px;
}

.mini-search {
  width: 134px;
  height: 27px;
  border: 3px solid #000;
  border-radius: 14px;
  background: #fff;
  display: flex;
  align-items: center;
  gap: 4px;
  padding-left: 3px;
  font-size: 15px;
  color: #888;
}

.mini-subtitle {
  font-size: 31px;
  font-weight: 700;
  white-space: nowrap;
}

.mini-cloud {
  width: 130px;
  font-size: 6.5px;
  line-height: 12px;
  white-space: nowrap;
}

.mini-cloud small {
  font-size: 4.5px;
  color: #777;
}

.mini-cloud em {
  color: #c0506c;
  font-style: normal;
}

.mini-para {
  margin-bottom: 22px;
  font-size: 7px;
  line-height: 10px;
  white-space: nowrap;
}

.mini-para u {
  color: #3d71b3;
}

.mini-para u.plain {
  color: #222;
}

.mini-para em {
  color: #c0506c;
  font-style: normal;
}

.lib-scroll {
  height: 32px;
  background: #f8f8f8;
  border-left: 2px solid #fff;
  border-bottom: 2px solid #c8c8c8;
  padding: 8px 0 0 6px;
}

.lib-thumb {
  width: 2208px;
  height: 16px;
  border-radius: 8px;
  background: #bebebe;
}

/* main area */
.workspace {
  flex: 1;
  display: flex;
  min-height: 0;
}

.sidebar {
  width: 362px;
  flex: none;
  background: #eeeeee;
  border-right: 2px solid #dcdcdc;
}

.side-head {
  height: 71px;
  background: #c8c9cb;
  display: flex;
  align-items: center;
  padding: 3px 0 0 33px;
  margin-bottom: 1px;
}

.side-title {
  font-size: 25.5px;
  font-weight: 500;
  color: #222;
  width: 231px;
}

.side-view {
  display: block;
  width: 22px;
  height: 22px;
  border: 2px solid #6faae6;
}

.side-menu {
  margin-left: 14px;
}

.defs {
  position: absolute;
}

.page {
  height: 278px;
  padding: 12px 0 0 46px;
}

.page.selected {
  background: #6faae6;
}

.page-card {
  position: relative;
  width: 290px;
  height: 251px;
  background: #fff;
  box-shadow: 0 1px 4px rgba(0, 0, 0, 0.3);
  padding-top: 24px;
  display: flex;
  flex-direction: column;
  align-items: center;
}

.thumb {
  width: 233px;
  height: 159px;
  flex: none;
  filter: drop-shadow(0 2px 3px rgba(0, 0, 0, 0.4));
}

.page-label {
  margin-top: 24px;
  font-size: 22px;
  line-height: 34px;
  letter-spacing: 0.2px;
  color: #444;
}

.page-label-short {
  margin-right: 10px;
}

.page-chevron {
  position: absolute;
  right: 22px;
  top: 220px;
}

/* canvas */
.canvas {
  flex: 1;
  min-width: 0;
  display: grid;
  grid-template-columns: 1fr 30px;
  grid-template-rows: 1fr 30px;
  background: #fff;
}

.stage {
  padding: 18px 0 0 18px;
  min-height: 0;
  overflow: hidden;
}

.v-scroll {
  grid-row: 1 / 3;
  grid-column: 2;
  background: #fafafa;
  border-left: 2px solid #e6e6e6;
  padding: 4px 0 0 2px;
}

.v-thumb {
  width: 16px;
  height: 973px;
  border-radius: 8px;
  background: #bebebe;
}

.h-scroll {
  grid-row: 2;
  grid-column: 1;
  background: #fafafa;
  border-top: 2px solid #e6e6e6;
  padding: 6px 0 0 6px;
}

.h-thumb {
  width: 2392px;
  height: 16px;
  border-radius: 8px;
  background: #bebebe;
}

/* wireframe */
.wf-window {
  width: 1752px;
  height: 1197px;
  border: 4px solid #000;
  display: flex;
  flex-direction: column;
  font-family: "Lato", sans-serif;
  color: #111;
}

.wf-head {
  height: 106px;
  flex: none;
  background: #bfbfbf;
  border-bottom: 4px solid #000;
}

.wf-title {
  height: 29px;
  text-align: center;
  font-size: 20px;
  line-height: 28px;
}

.wf-nav {
  display: flex;
  align-items: flex-start;
  padding: 0 15px 0 19px;
}

.wf-url {
  flex: 1;
  height: 31px;
  margin: 12px 0 0 19px;
  padding-left: 4px;
  border: 4px solid #000;
  border-radius: 5px 2px 2px 5px;
  background: #fff;
  font-size: 20px;
  line-height: 23px;
}

.wf-search {
  width: 88px;
  height: 37px;
  margin: 8px 0 0 23px;
  border: 3px solid #000;
  border-radius: 18px;
  background: #fff;
  padding: 3px 0 0 2px;
}

.wf-body {
  flex: 1;
  display: flex;
  min-height: 0;
  padding-right: 3px;
  background: #fff;
}

.wf-page {
  flex: 1;
  min-width: 0;
}

.site-nav {
  height: 37px;
  margin-top: 78px;
  padding: 0 99px 0 129px;
  display: flex;
  justify-content: space-between;
  align-items: center;
}

.site-name {
  font-size: 28px;
  color: #2a5a96;
}

.site-links {
  display: flex;
  align-items: center;
  font-size: 27px;
  color: #5b7aa6;
}

.site-links span {
  height: 37px;
  line-height: 36px;
  padding: 0 14px;
}

.site-links span + span {
  border-left: 2px solid #a6a6a6;
}

.site-links span:last-child {
  padding-right: 0;
}

.columns {
  margin-top: 78px;
  display: flex;
}

h2 {
  margin: 0;
  font-size: 36px;
  font-weight: 400;
  line-height: 40px;
  color: #000;
  white-space: nowrap;
}

.history {
  width: 679px;
  flex: none;
  padding-left: 159px;
}

.timeline {
  position: relative;
  height: 514px;
  margin-top: 56px;
  padding: 0 0 0 70px;
  font-size: 19.5px;
}

.timeline::before {
  content: "";
  position: absolute;
  left: 9px;
  top: 0;
  width: 3px;
  height: 514px;
  background: #000;
}

.job {
  position: relative;
}

.job::before {
  content: "";
  position: absolute;
  left: -70px;
  width: 20px;
  height: 22px;
  border-radius: 50%;
  background: #000;
}

.job-date {
  line-height: 24px;
  margin-left: 2px;
}

.job-name {
  line-height: 26px;
  font-weight: 900;
  font-size: 23px;
  letter-spacing: 1px;
}

.job-pos {
  line-height: 24px;
}

.job-1 .job-name { margin: 14px 0 3px 3px; }
.job-1 .job-pos { margin-left: 2px; }
.job-1::before { top: 41px; }

.job-2 { margin-top: 51px; }
.job-2 .job-name { margin: 6px 0 4px; }
.job-2::before { top: 35px; }

.job-3 { margin-top: 34px; }
.job-3 .job-name { margin: 11px 0 -3px; }
.job-3::before { top: 40px; }

.job-4 { margin-top: 49px; }
.job-4 .job-name { margin: 10px 0 4px; }
.job-4::before { top: 39px; }

.skills {
  flex: 1;
}

.skills h2 {
  margin-left: 339px;
  letter-spacing: 1.5px;
}

.chart {
  width: 910px;
  height: 394px;
  margin-top: 125px;
  padding-top: 64px;
  border-left: 5px solid #000;
  border-bottom: 5px solid #000;
}

.bar {
  height: 56px;
  border: 4px solid #000;
  border-left-width: 3px;
  font-size: 20px;
  line-height: 48px;
  padding-left: 76px;
  color: #111;
}

.bar.light {
  background: #dedede;
}

.bar.dark {
  background: #969696;
  margin-top: 5px;
}

.bar.group-start {
  margin-top: 49px;
  height: 57px;
  line-height: 46px;
}

.bar.django {
  margin-top: 2px;
  padding-left: 72px;
  line-height: 44px;
}

.bar.progress {
  position: relative;
  height: 50px;
  margin: -6px 0 0 -5px;
  padding: 0;
  border-width: 3px;
  background: #fff;
}

.progress-fill {
  height: 44px;
  background: #c9c9c9;
  padding-left: 76px;
  line-height: 44px;
  white-space: nowrap;
}

.site-foot {
  margin-top: 75px;
  padding: 0 99px 0 89px;
  display: flex;
  justify-content: space-between;
  align-items: center;
}

.contact-row {
  height: 33px;
  display: flex;
  align-items: center;
  gap: 15px;
  font-size: 21.5px;
}

.social {
  display: flex;
  margin-top: 6px;
}

.social svg:nth-child(2) { margin-left: 60px; }
.social svg:nth-child(3) { margin-left: 51px; }
.social svg:nth-child(4) { margin-left: 55px; }

.wf-scroll {
  width: 21px;
  flex: none;
  margin-top: 3px;
  border-left: 3px solid #000;
  border-right: 3px solid #000;
  display: flex;
  flex-direction: column;
  justify-content: space-between;
}

.scroll-btn {
  height: 15px;
  border-top: 2px solid #000;
  border-bottom: 2px solid #000;
  display: flex;
  align-items: center;
  justify-content: center;
}

.tri-up {
  width: 0;
  height: 0;
  border-left: 5px solid transparent;
  border-right: 5px solid transparent;
  border-bottom: 8px solid #000;
}

.tri-down {
  width: 0;
  height: 0;
  border-left: 5px solid transparent;
  border-right: 5px solid transparent;
  border-top: 8px solid #000;
}

.scroll-handle {
  width: 11px;
  height: 32px;
  margin: 3px 0 0 2px;
  border-radius: 4px;
  background: #000;
}

.wf-foot {
  height: 38px;
  flex: none;
  background: #bfbfbf;
  border-top: 4px solid #000;
  display: flex;
  justify-content: flex-end;
  align-items: center;
  padding-right: 3px;
}
```
